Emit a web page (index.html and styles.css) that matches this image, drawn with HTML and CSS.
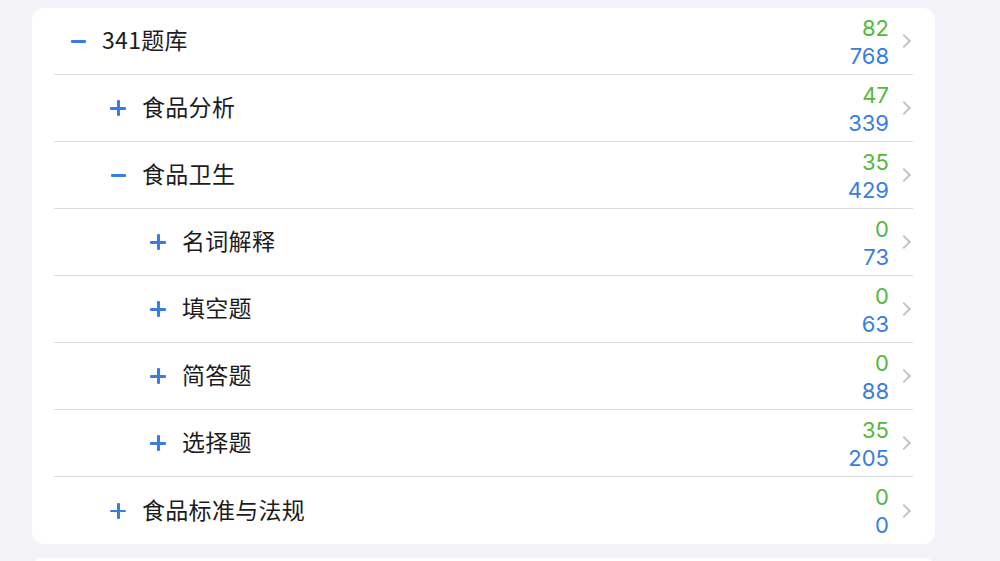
FILE: index.html
```html
<!DOCTYPE html>
<html>
    <head>
        <meta charset="utf-8">
        <title>题库</title>
        <link rel="stylesheet" href="styles.css">
    </head>
    <body>
        <div class="card">
            <div class="row level1">
                <span class="toggle minus"></span>
                <span class="name">341题库</span>
                <span class="counts"><span class="done">82</span><span class="total">768</span></span>
                <span class="chevron"></span>
            </div>
            <div class="row level2">
                <span class="toggle plus"></span>
                <span class="name">食品分析</span>
                <span class="counts"><span class="done">47</span><span class="total">339</span></span>
                <span class="chevron"></span>
            </div>
            <div class="row level2">
                <span class="toggle minus"></span>
                <span class="name">食品卫生</span>
                <span class="counts"><span class="done">35</span><span class="total">429</span></span>
                <span class="chevron"></span>
            </div>
            <div class="row level3">
                <span class="toggle plus"></span>
                <span class="name">名词解释</span>
                <span class="counts"><span class="done">0</span><span class="total">73</span></span>
                <span class="chevron"></span>
            </div>
            <div class="row level3">
                <span class="toggle plus"></span>
                <span class="name">填空题</span>
                <span class="counts"><span class="done">0</span><span class="total">63</span></span>
                <span class="chevron"></span>
            </div>
            <div class="row level3">
                <span class="toggle plus"></span>
                <span class="name">简答题</span>
                <span class="counts"><span class="done">0</span><span class="total">88</span></span>
                <span class="chevron"></span>
            </div>
            <div class="row level3">
                <span class="toggle plus"></span>
                <span class="name">选择题</span>
                <span class="counts"><span class="done">35</span><span class="total">205</span></span>
                <span class="chevron"></span>
            </div>
            <div class="row level2 last">
                <span class="toggle plus"></span>
                <span class="name">食品标准与法规</span>
                <span class="counts"><span class="done">0</span><span class="total">0</span></span>
                <span class="chevron"></span>
            </div>
        </div>
        <div class="card next"></div>
    </body>
</html>
```

FILE: styles.css
```css
body {
    margin: 0;
    padding-top: 8px;
    background: #f2f2f7;
    font-family: "Noto Sans CJK SC", sans-serif;
    overflow: hidden;
}

.card {
    margin-left: 32px;
    width: 903px;
    background: #fff;
    border-radius: 12px;
}

.card.next {
    margin-top: 14px;
    height: 20px;
}

.row {
    display: flex;
    align-items: center;
    height: 66px;
    margin: 0 22px;
    border-bottom: 1px solid #dcdcdf;
}

.row.last {
    border-bottom: none;
    height: 67px;
}

.level1 {
    padding-left: 16px;
}

.level2 {
    padding-left: 56px;
}

.level3 {
    padding-left: 96px;
}

/* the + / - expander */
.toggle {
    position: relative;
    width: 16px;
    height: 16px;
    margin-right: 16px;
    flex: none;
}

.toggle::before,
.toggle::after {
    content: "";
    position: absolute;
    background: #3a7de0;
    border-radius: 1px;
}

.toggle::before {
    left: 0;
    top: 7px;
    width: 16px;
    height: 2.5px;
}

.plus::after {
    left: 7px;
    top: 0;
    width: 2.5px;
    height: 16px;
}

.minus::before {
    left: 1px;
    width: 15px;
}

.name {
    flex: 1;
    font-size: 23px;
    line-height: 30px;
    color: #1c1c1e;
    padding-bottom: 4px;
    letter-spacing: 0.3px;
}

.counts {
    display: flex;
    flex-direction: column;
    align-items: flex-end;
    font-family: Inter, sans-serif;
    font-size: 22px;
    line-height: 28px;
    margin-right: 10px;
    margin-top: 1px;
}

.done {
    color: #55b83e;
}

.total {
    color: #3a7de0;
}

.chevron {
    width: 8px;
    height: 8px;
    border-top: 2px solid #c4c4c8;
    border-right: 2px solid #c4c4c8;
    transform: rotate(45deg);
    margin-right: 4px;
}
```
